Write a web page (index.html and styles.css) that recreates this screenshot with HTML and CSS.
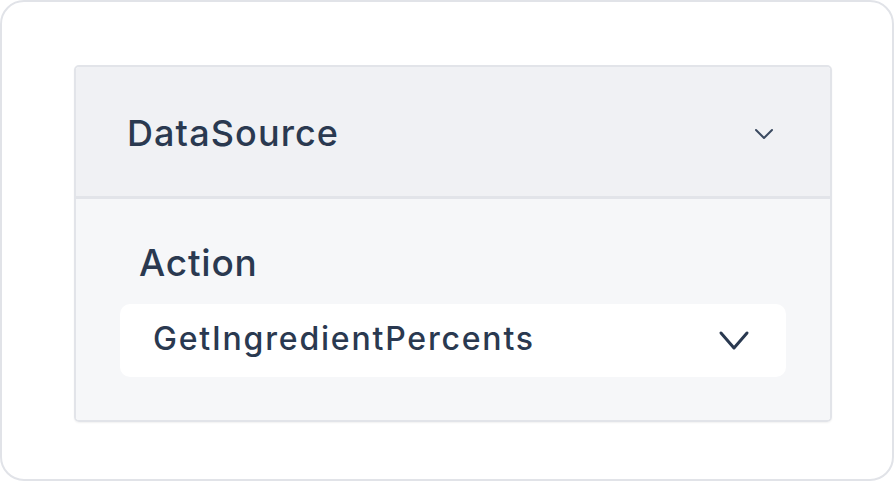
FILE: index.html
```html
<!DOCTYPE html>
<html>
<head>
<meta charset="utf-8">
<link rel="stylesheet" href="styles.css">
</head>
<body>
<div class="frame">
  <div class="card">
    <div class="card-header">
      <span class="title">DataSource</span>
      <svg class="chev-small" width="20" height="12" viewBox="0 0 20 12"><path d="M2 2 L10 10 L18 2" fill="none" stroke="#3b4a60" stroke-width="2" stroke-linecap="round" stroke-linejoin="round"/></svg>
    </div>
    <div class="card-body">
      <div class="label">Action</div>
      <div class="select">
        <span class="value">GetIngredientPercents</span>
        <svg class="chev" width="32" height="22" viewBox="0 0 32 22"><path d="M3 3 L16 18 L29 3" fill="none" stroke="#2a3950" stroke-width="3" stroke-linecap="round" stroke-linejoin="round"/></svg>
      </div>
    </div>
  </div>
</div>
</body>
</html>
```
FILE: styles.css
```css
html, body {
  margin: 0;
  padding: 0;
  background: #ffffff;
}
body {
  font-family: Inter, "Noto Sans", sans-serif;
  color: #2a3950;
}
.frame {
  box-sizing: border-box;
  width: 894px;
  height: 481px;
  border: 2px solid #e1e3e8;
  border-radius: 24px;
  padding: 63px 62px 0 72px;
}
.card {
  box-sizing: border-box;
  width: 758px;
  height: 357px;
  border: 2px solid #e2e4e9;
  border-radius: 5px;
  overflow: hidden;
  box-shadow: 0 1px 2px rgba(0,0,0,0.06);
  display: flex;
  flex-direction: column;
}
.card-header {
  height: 129px;
  background: #f0f1f4;
  border-bottom: 3px solid #e2e4e9;
  display: flex;
  align-items: center;
  justify-content: space-between;
  padding: 0 56px 0 51px;
  flex-shrink: 0;
}
.title {
  font-size: 36px;
  font-weight: 500;
  letter-spacing: 1.1px;
  margin-top: 2px;
}
.chev-small {
  display: block;
  margin-top: 4px;
}
.card-body {
  flex: 1;
  background: #f6f7f9;
  padding: 42px 44px 0 44px;
}
.label {
  font-size: 37px;
  font-weight: 500;
  letter-spacing: 0.8px;
  line-height: 44px;
  margin-left: 19px;
}
.select {
  margin-top: 19px;
  height: 73px;
  background: #ffffff;
  border-radius: 10px;
  display: flex;
  align-items: center;
  justify-content: space-between;
  padding: 0 36px 0 33px;
}
.value {
  font-size: 32px;
  font-weight: 500;
  letter-spacing: 1.8px;
  margin-bottom: 4px;
}
.chev {
  display: block;
}
```
